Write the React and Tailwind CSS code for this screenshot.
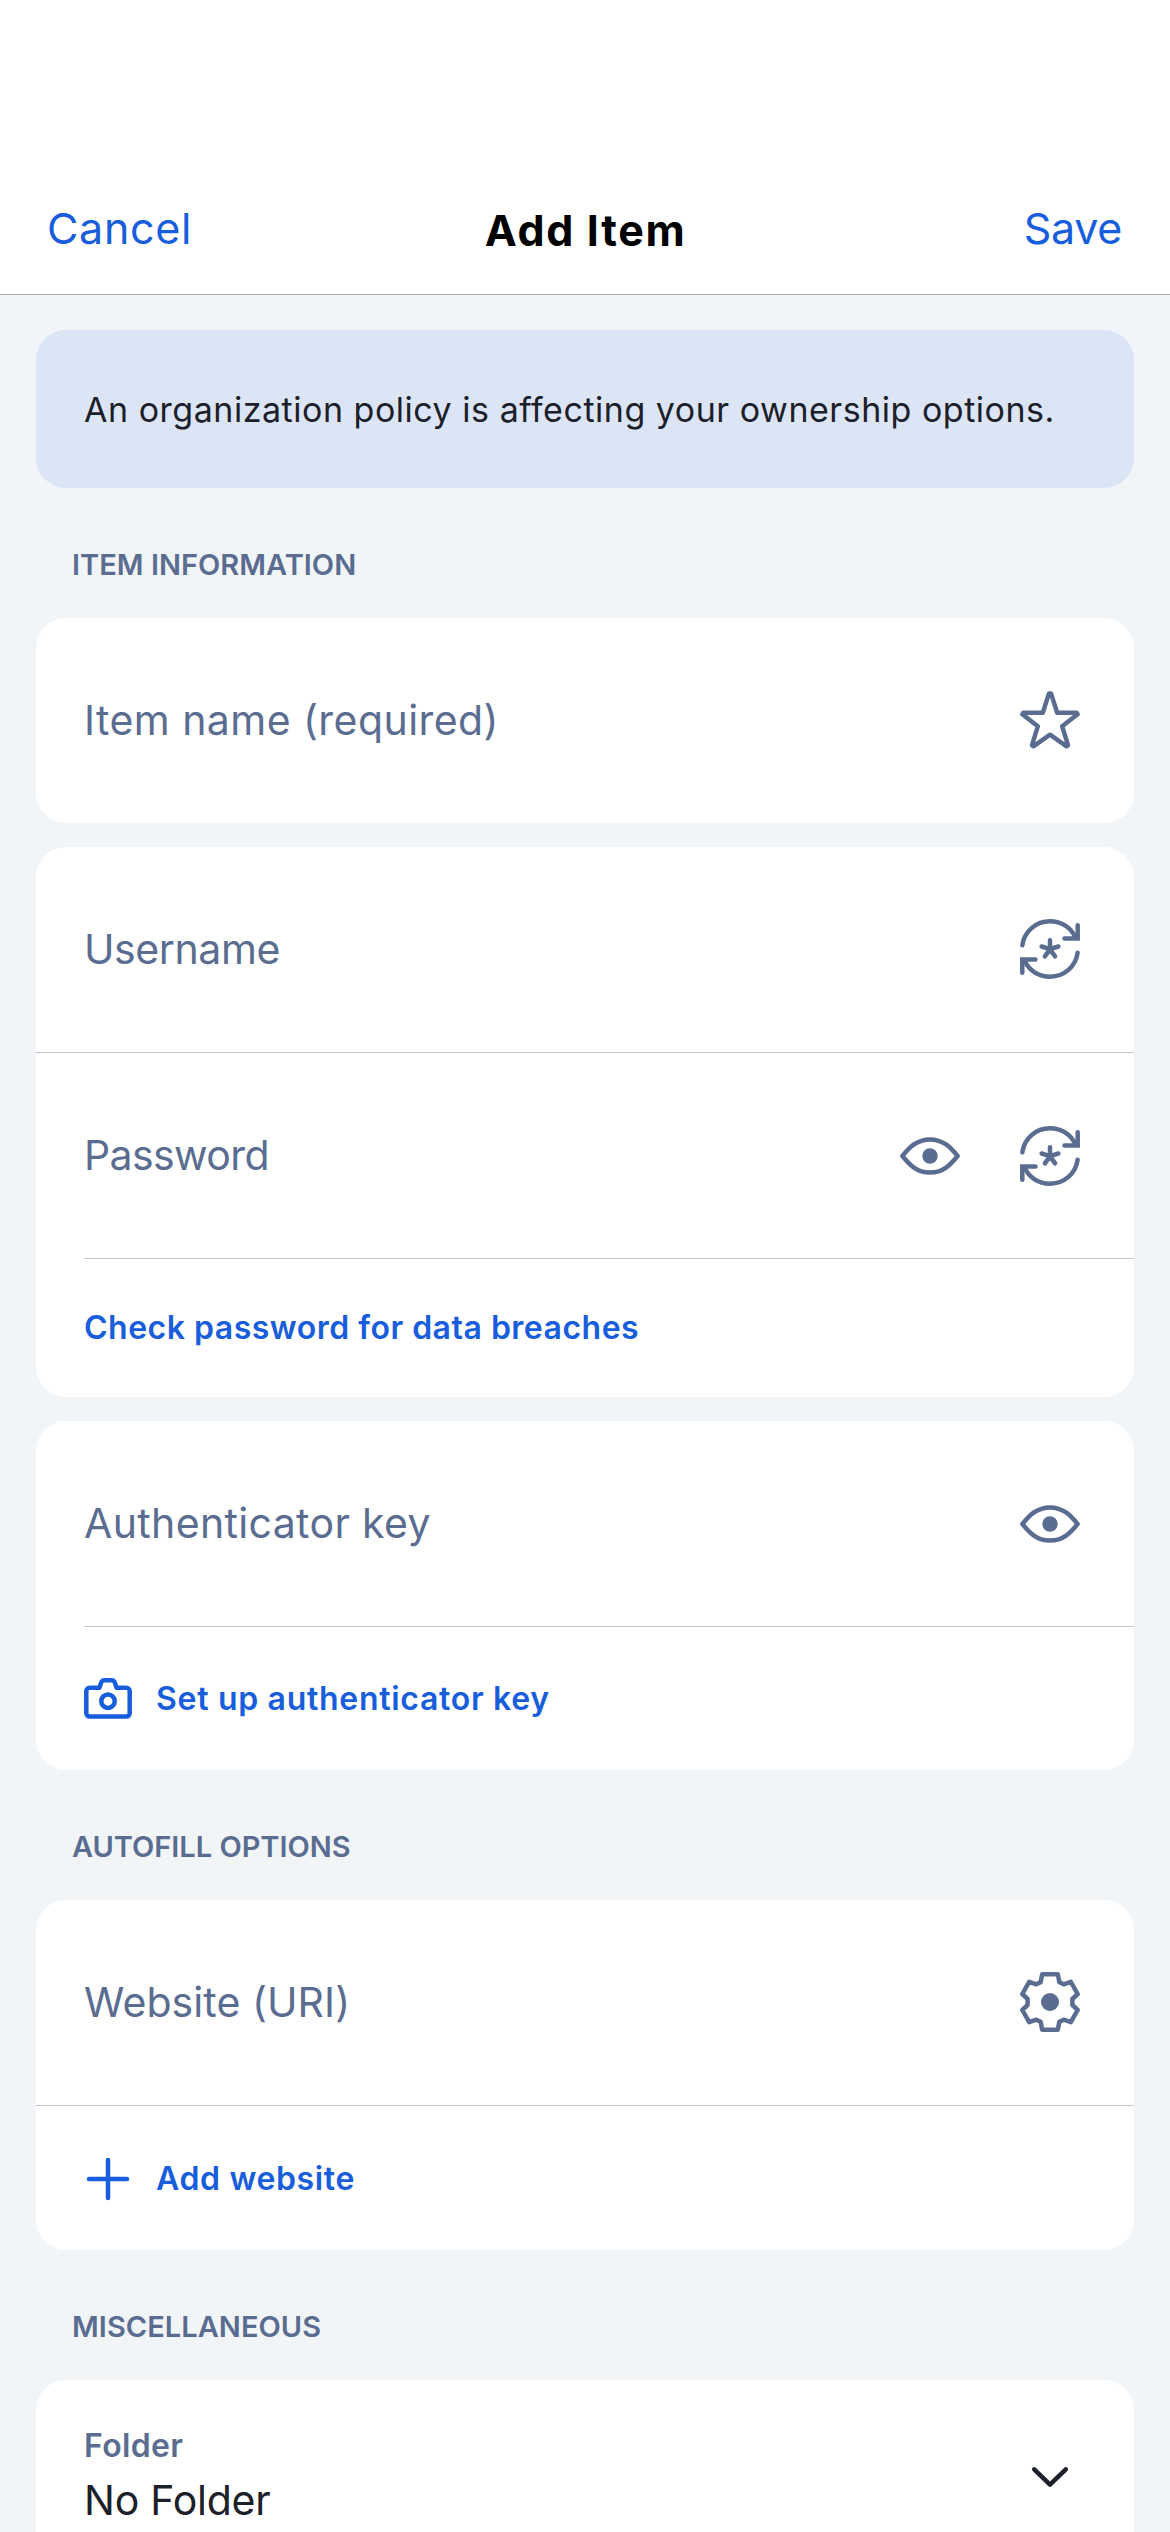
import React from "react";

const iconProps = {
  fill: "none",
  stroke: "currentColor",
  strokeWidth: 4.5,
  strokeLinecap: "round",
  strokeLinejoin: "round",
};

function StarIcon() {
  return (
    <svg viewBox="0 0 60 60" className="size-[60px] shrink-0" {...iconProps}>
      <path d="M29 3.4H31L37.2 22.8H56.8L57.6 24.3L42.2 36.3L48 55.2L46.6 56.3L30 44.7L13.4 56.3L12 55.2L17.8 36.3L2.4 24.3L3.2 22.8H22.8Z" />
    </svg>
  );
}

function GenerateIcon() {
  return (
    <svg viewBox="0 0 60 60" className="size-[60px] shrink-0" {...iconProps}>
      <path d="M2.4 26.2C4.2 12.4 15.8 2.3 30 2.3C41.4 2.3 51.2 8.6 55.4 18.6" />
      <path d="M57.6 33.8C55.8 47.6 44.2 57.7 30 57.7C18.6 57.7 8.8 51.4 4.6 41.4" />
      <path d="M57.7 6.2V19.4H44.5" strokeLinejoin="miter" />
      <path d="M2.3 53.8V40.6H15.5" strokeLinejoin="miter" />
      <path d="M30 30.2V21.2M30 30.2L21.6 27.5M30 30.2L38.4 27.5M30 30.2L24.9 37.4M30 30.2L35.1 37.4" />
    </svg>
  );
}

function EyeIcon() {
  return (
    <svg viewBox="0 0 60 60" className="size-[60px] shrink-0" {...iconProps}>
      <path d="M2.4 30C9 22 16.5 13.4 30 13.4S51 22 57.6 30C51 38 43.5 46.6 30 46.6S9 38 2.4 30Z" />
      <circle cx="30" cy="30" r="7.7" fill="currentColor" stroke="none" />
    </svg>
  );
}

function GearIcon() {
  return (
    <svg viewBox="0 0 60 60" className="size-[60px] shrink-0" {...iconProps}>
      <path d="M22.2 2.3H37.8L39.4 10.2L43.8 12.3L50.8 9.9L57.7 22L52.4 27V33L57.7 38L50.8 50.1L43.8 47.7L39.4 49.8L37.8 57.7H22.2L20.6 49.8L16.2 47.7L9.2 50.1L2.3 38L7.6 33V27L2.3 22L9.2 9.9L16.2 12.3L20.6 10.2Z" />
      <circle cx="30" cy="30" r="9" fill="currentColor" stroke="none" />
    </svg>
  );
}

function CameraIcon() {
  return (
    <svg viewBox="0 0 48 41" className="h-[41px] w-12 shrink-0" {...iconProps}>
      <path d="M15.4 9.8H5.6A3.3 3.3 0 0 0 2.3 13.1V35.3A3.3 3.3 0 0 0 5.6 38.6H42.4A3.3 3.3 0 0 0 45.7 35.3V13.1A3.3 3.3 0 0 0 42.4 9.8H32.6L31.1 5.2Q30 2.3 27.6 2.3H20.4Q18 2.3 16.9 5.2Z" />
      <circle cx="24" cy="23.2" r="6.7" />
    </svg>
  );
}

function PlusIcon() {
  return (
    <svg viewBox="0 0 48 48" className="size-12 shrink-0" {...iconProps}>
      <path d="M24 5V43M5 24H43" />
    </svg>
  );
}

function ChevronIcon() {
  return (
    <svg viewBox="0 0 60 60" className="size-[60px] shrink-0" {...iconProps}>
      <path d="M14.2 22.3L30 37.6L45.8 22.3" />
    </svg>
  );
}

function SectionTitle({ className, children }) {
  return (
    <h2 className="flex h-[130px] items-center px-9 pt-[23px] text-[29px] font-semibold text-[#5a6d91]">
      <span className={className}>{children}</span>
    </h2>
  );
}

function Card({ children }) {
  return <section className="overflow-hidden rounded-[30px] bg-white">{children}</section>;
}

function Field({ label, className, iconClass = "pb-px", children }) {
  return (
    <div className="flex h-[205px] items-center justify-between pr-[54px] pl-12 text-[#5a6d91]">
      <span className={`text-[41px] ${className}`}>{label}</span>
      <div className={`flex gap-[60px] ${iconClass}`}>{children}</div>
    </div>
  );
}

function Divider({ inset = false }) {
  return <div className={inset ? "ml-12 h-px bg-[#c6c6c8]" : "h-px bg-[#c6c6c8]"} />;
}

export default function App() {
  return (
    <div className="h-[2532px] w-[1170px] overflow-hidden bg-[#f2f5f8] font-['Inter',sans-serif] whitespace-nowrap">
      <header className="grid h-[295px] grid-cols-3 items-center border-b border-[#a9abad] bg-white pt-[164px] pr-12 pl-[47px] text-[43px] leading-[54px]">
        <button className="justify-self-start pb-[3px] tracking-[0.7px] text-[#175ddc]">Cancel</button>
        <h1 className="justify-self-center pt-px pl-[2px] font-bold tracking-[1.65px] text-black">Add Item</h1>
        <button className="justify-self-end pb-[3px] tracking-[-0.3px] text-[#175ddc]">Save</button>
      </header>

      <main className="px-9 pt-[35px]">
        <div className="flex h-[158px] items-center rounded-[30px] bg-[#dbe5f6] pl-12 text-[34px] tracking-[0.52px] text-[#1b2029]">
          An organization policy is affecting your ownership options.
        </div>

        <SectionTitle className="tracking-[0.02px]">ITEM INFORMATION</SectionTitle>
        <div className="flex flex-col gap-6">
          <Card>
            <Field label="Item name (required)" className="tracking-[0.44px]">
              <StarIcon />
            </Field>
          </Card>
          <Card>
            <Field label="Username" className="tracking-[-0.4px]">
              <GenerateIcon />
            </Field>
            <Divider />
            <Field label="Password" className="tracking-[-0.6px]" iconClass="pt-px">
              <EyeIcon />
              <GenerateIcon />
            </Field>
            <Divider inset />
            <button className="flex h-[138px] items-center pl-12 text-[32px] font-semibold tracking-[0.5px] text-[#175ddc]">
              Check password for data breaches
            </button>
          </Card>
          <Card>
            <Field label="Authenticator key" className="tracking-[0.36px]" iconClass="pt-px">
              <EyeIcon />
            </Field>
            <Divider inset />
            <button className="flex h-[143px] items-center gap-6 pl-12 text-[32px] font-semibold tracking-[0.7px] text-[#175ddc]">
              <CameraIcon />
              Set up authenticator key
            </button>
          </Card>
        </div>

        <SectionTitle className="tracking-[-0.02px]">AUTOFILL OPTIONS</SectionTitle>
        <Card>
          <Field label="Website (URI)" className="tracking-[0.08px]">
            <GearIcon />
          </Field>
          <Divider />
          <button className="flex h-36 items-center gap-6 pt-px pl-12 text-[32px] font-semibold tracking-[0.65px] text-[#175ddc]">
            <PlusIcon />
            Add website
          </button>
        </Card>

        <SectionTitle className="tracking-[0.05px]">MISCELLANEOUS</SectionTitle>
        <Card>
          <div className="flex h-[194px] items-center justify-between pr-[54px] pl-12">
            <div className="flex flex-col gap-[10px] pb-[8px] leading-[44px]">
              <span className="text-[32px] font-semibold tracking-[0.35px] text-[#5a6d91]">Folder</span>
              <span className="text-[41px] tracking-[-0.23px] text-[#1b2029]">No Folder</span>
            </div>
            <span className="text-[#1b2029]">
              <ChevronIcon />
            </span>
          </div>
        </Card>
      </main>
    </div>
  );
}
